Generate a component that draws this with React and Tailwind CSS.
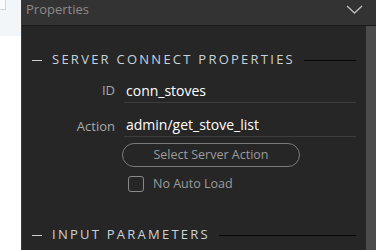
export default function App() {
  return (
    <div
      className="flex h-[250px] w-[376px] overflow-hidden bg-white"
      style={{ fontFamily: '"Open Sans", "Noto Sans", sans-serif' }}
    >
      {/* page behind the panel */}
      <div className="w-[21px] shrink-0 flex flex-col">
        <div className="h-[36px] bg-[#f3f6f8]">
          <div className="h-[10px] w-[6px] border-b border-r border-[#cfd6dc] bg-[#fafbfc]" />
        </div>
      </div>

      <div className="flex flex-1 flex-col border-l border-[#3a3a3a] bg-[#262626]">
        {/* header */}
        <div className="flex h-[26px] shrink-0 items-start justify-between border-b border-[#1a1a1a] bg-[#333333] pl-[4px] pr-[13px]">
          <span className="pt-[1px] text-[13px] leading-[16px] text-[#8c8c8c]">Properties</span>
          <svg className="mt-[4px]" width="17" height="11" viewBox="0 0 17 11" fill="none">
            <path d="M1 2 L8.5 9 L16 2" stroke="#bdbdbd" strokeWidth="1.3" />
          </svg>
        </div>

        <div className="flex flex-1">
          <div className="flex flex-1 flex-col pl-[10px] pr-[10px]">
            {/* section title */}
            <div className="mt-[24px] flex h-[20px] shrink-0 items-center">
              <div className="h-px w-[10px] bg-[#cfcfcf]" />
              <span className="ml-[10px] text-[13px] tracking-[2.25px] text-[#c9d3dc]">
                SERVER CONNECT PROPERTIES
              </span>
              <div className="ml-[9px] h-px flex-1 bg-[#050505]" />
            </div>

            {/* ID */}
            <div className="mt-[10px] flex shrink-0 items-end">
              <span className="w-[83px] pb-[3px] text-right text-[13px] leading-[20px] text-[#a9a9a9]">ID</span>
              <div className="ml-[9px] flex-1 border-b border-[#3d3d3d] pb-[1px] pl-[2px] text-[14px] leading-[20px] text-white">
                conn_stoves
              </div>
            </div>

            {/* Action */}
            <div className="mt-[12px] flex shrink-0 items-end">
              <span className="w-[83px] pb-[1px] text-right text-[13px] leading-[20px] text-[#a9a9a9]">Action</span>
              <div className="ml-[9px] flex-1 border-b border-[#3d3d3d] pb-[1px] pl-[2px] text-[14px] leading-[20px] text-white">
                admin/get_stove_list
              </div>
            </div>

            {/* button */}
            <div className="mt-[6px] shrink-0 pl-[90px]">
              <div className="flex h-[24px] w-[178px] items-center justify-center rounded-full border border-[#7a7a7a] text-[12.5px] text-[#9c9c9c]">
                Select Server Action
              </div>
            </div>

            {/* checkbox */}
            <div className="mt-[9px] flex h-[16px] shrink-0 items-center pl-[96px]">
              <div className="h-[16px] w-[16px] rounded-[3px] border border-[#8a8a8a]" />
              <span className="ml-[9px] text-[12.5px] text-[#9c9c9c]">No Auto Load</span>
            </div>

            {/* next section */}
            <div className="mt-[33px] flex h-[20px] shrink-0 items-center">
              <div className="h-px w-[10px] bg-[#cfcfcf]" />
              <span className="ml-[10px] text-[13px] tracking-[2.25px] text-[#c9d3dc]">
                INPUT PARAMETERS
              </span>
              <div className="ml-[9px] h-px flex-1 bg-[#050505]" />
            </div>
          </div>

          {/* scrollbar */}
          <div className="w-[10px] shrink-0 bg-[#4b4b4b]" />
        </div>
      </div>
    </div>
  );
}
